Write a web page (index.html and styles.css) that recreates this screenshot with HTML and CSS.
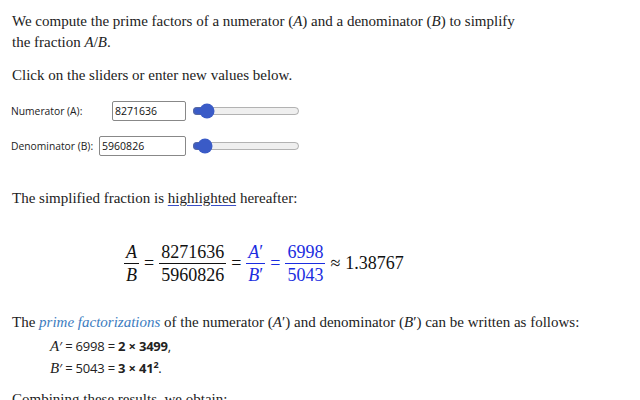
FILE: index.html
```html
<!DOCTYPE html>
<html>
<head>
	<meta charset="UTF-8">
	<title>Fraction simplifier</title>
	<link rel="stylesheet" href="styles.css">
</head>
<body>
	<p>We compute the prime factors of a numerator (<i>A</i>) and a denominator (<i>B</i>) to simplify<br>the fraction <i>A</i>/<i>B</i>.</p>
	<p class="hint">Click on the sliders or enter new values below.</p>

	<div class="controls">
		<div class="row">
			<div class="field">
				<label for="num">Numerator (A):</label>
				<input id="num" type="text" value="8271636">
			</div>
			<input type="range" min="0" max="100000000" value="7271636">
		</div>
		<div class="row">
			<div class="field">
				<label for="den">Denominator (B):</label>
				<input id="den" type="text" value="5960826">
			</div>
			<input type="range" min="0" max="100000000" value="5960826">
		</div>
	</div>

	<p class="after">The simplified fraction is <span class="hl">highlighted</span> hereafter:</p>

	<div class="display">
		<span class="frac"><span class="top"><i>A</i></span><span class="bot"><i>B</i></span></span>
		<span class="op">=</span>
		<span class="frac"><span class="top">8271636</span><span class="bot">5960826</span></span>
		<span class="op">=</span>
		<span class="frac blue"><span class="top"><i>A</i>′</span><span class="bot"><i>B</i>′</span></span>
		<span class="op blue">=</span>
		<span class="frac blue"><span class="top">6998</span><span class="bot">5043</span></span>
		<span class="op">≈</span>
		<span class="approx">1.38767</span>
	</div>

	<p class="primes">The <a href="#">prime factorizations</a> of the numerator (<i>A</i>′) and denominator (<i>B</i>′) can be written as follows:</p>
	<div class="fact">
		<div><i>A</i>′ = 6998 = <b>2 × 3499</b>,</div>
		<div><i>B</i>′ = 5043 = <b>3 × 41<sup>2</sup></b>.</div>
	</div>

	<p class="combine">Combining these results, we obtain:</p>
</body>
</html>
```

FILE: styles.css
```css
* {
	box-sizing: border-box;
}

body {
	margin: 0;
	padding: 11px 12px 0;
	background: #fff;
	color: #222;
	font-family: "Liberation Serif", serif;
	font-size: 15px;
	line-height: 21px;
}

p {
	margin: 0;
}

.hint {
	margin-top: 12px;
}

/* inputs */

.controls {
	font-family: "Open Sans", sans-serif;
	font-size: 10.3px;
	color: #222;
	margin-top: 15px;
}

.controls .row {
	display: flex;
	align-items: center;
	height: 20px;
	margin-bottom: 15px;
}

.controls .field {
	display: flex;
	align-items: center;
	width: 174px;
	gap: 6px;
}

.controls label {
	margin-left: -1px;
	white-space: nowrap;
	min-width: 0;
}

.controls .row:first-child label {
	width: 95px;
}

.controls input[type="text"] {
	flex: 1;
	min-width: 0;
	height: 20px;
	padding: 1px 2px;
	border: 1px solid #888;
	border-radius: 2px;
	font-family: "Open Sans", sans-serif;
	font-size: 10.5px;
	color: #111;
}

.controls input[type="range"] {
	width: 108px;
	margin: 0 0 0 6px;
	accent-color: #3a5bc7;
}

.after {
	margin-top: 32px;
}

.hl {
	text-decoration: underline;
	text-decoration-color: #3b4fc7;
	text-underline-offset: 2px;
}

/* displayed equation */

.display {
	display: flex;
	align-items: center;
	padding-left: 109px;
	margin: 32px 0 26px;
	font-size: 18px;
	color: #111;
}

.frac {
	display: inline-flex;
	flex-direction: column;
	align-items: center;
	margin: 0 3px;
}

.frac .top {
	padding: 0 2px;
	border-bottom: 1px solid currentColor;
	line-height: 22px;
}

.frac .bot {
	padding: 0 2px;
	line-height: 22px;
}

.op {
	margin: 0 2px;
}

.blue {
	color: #1b2de0;
}

.approx {
	margin-left: 3px;
}

/* factorizations */

.primes a {
	color: #3c7cc0;
	font-style: italic;
	text-decoration: none;
}

.fact {
	margin-top: 2px;
	padding-left: 38px;
	font-family: "Open Sans", sans-serif;
	font-size: 13px;
	line-height: 22px;
	letter-spacing: -0.2px;
}

.fact i {
	font-family: "Liberation Serif", serif;
	font-size: 15px;
	letter-spacing: 0;
}

.fact sup {
	font-size: 9px;
	line-height: 0;
}

.combine {
	margin-top: 10px;
}
```
